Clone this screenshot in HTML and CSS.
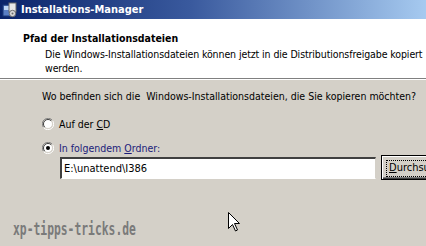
FILE: index.html
```html
<!DOCTYPE html>
<html lang="de">
<head>
<meta charset="utf-8">
<title>Installations-Manager</title>
<link rel="stylesheet" href="styles.css">
</head>
<body>
<div class="window">
  <div class="titlebar">
    <svg class="app-icon" width="16" height="16" viewBox="0 0 16 16">
      <rect x="1" y="3" width="8" height="11" fill="#5a7fc4" stroke="#1d3a7a" stroke-width="1"/>
      <rect x="2" y="4" width="6" height="4" fill="#bcd4f4"/>
      <rect x="7" y="1" width="7" height="9" fill="#e8e8e8" stroke="#6b6b6b" stroke-width="1"/>
      <circle cx="10.5" cy="11.5" r="3.2" fill="#d8d8d8" stroke="#6b6b6b" stroke-width="1"/>
      <circle cx="10.5" cy="11.5" r="1" fill="#6b6b6b"/>
    </svg>
    <span class="title">Installations-Manager</span>
  </div>
  <div class="header">
    <div class="header-title">Pfad der Installationsdateien</div>
    <div class="header-desc">Die Windows-Installationsdateien können jetzt in die Distributionsfreigabe kopiert<br>werden.</div>
  </div>
  <div class="content">
    <div class="question">Wo befinden sich die &nbsp;Windows-Installationsdateien, die Sie kopieren möchten?</div>
    <div class="radio-row">
      <svg class="radio" width="12" height="12" viewBox="0 0 12 12">
        <path d="M10.5 2.5 A5.5 5.5 0 0 0 1.5 9.5" fill="none" stroke="#808080"/>
        <path d="M1.5 9.5 A5.5 5.5 0 0 0 10.5 2.5" fill="none" stroke="#ffffff"/>
        <circle cx="6" cy="6" r="4.5" fill="#ffffff"/>
        <path d="M9.2 2.8 A4.5 4.5 0 0 0 2.8 9.2" fill="none" stroke="#404040"/>
        <path d="M2.8 9.2 A4.5 4.5 0 0 0 9.2 2.8" fill="none" stroke="#d4d0c8"/>
      </svg>
      <span class="label">Auf der <u>C</u>D</span>
    </div>
    <div class="radio-row">
      <svg class="radio" width="12" height="12" viewBox="0 0 12 12">
        <path d="M10.5 2.5 A5.5 5.5 0 0 0 1.5 9.5" fill="none" stroke="#808080"/>
        <path d="M1.5 9.5 A5.5 5.5 0 0 0 10.5 2.5" fill="none" stroke="#ffffff"/>
        <circle cx="6" cy="6" r="4.5" fill="#ffffff"/>
        <path d="M9.2 2.8 A4.5 4.5 0 0 0 2.8 9.2" fill="none" stroke="#404040"/>
        <path d="M2.8 9.2 A4.5 4.5 0 0 0 9.2 2.8" fill="none" stroke="#d4d0c8"/>
        <circle cx="6" cy="6" r="2" fill="#000000"/>
      </svg>
      <span class="label selected">In folgendem <u>O</u>rdner:</span>
    </div>
    <div class="path-row">
      <div class="path-input">E:\unattend\I386</div>
      <div class="browse-btn"><span class="focus"><u>D</u>urchsuchen...</span></div>
    </div>
  </div>
  <div class="watermark"><span>xp-tipps-tricks.de</span></div>
  <svg class="cursor" width="13" height="20" viewBox="0 0 13 20">
    <path d="M0.5 0.5 L0.5 16.5 L4.5 12.5 L7.5 19 L9.5 18 L6.5 11.5 L11.5 11.5 Z" fill="#ffffff" stroke="#000000" stroke-width="1" stroke-linejoin="miter"/>
  </svg>
</div>
</body>
</html>
```

FILE: styles.css
```css
html, body {
  margin: 0;
  padding: 0;
  width: 426px;
  height: 246px;
  overflow: hidden;
  background: #d4d0c8;
}

.window {
  position: relative;
  width: 426px;
  height: 246px;
  overflow: hidden;
  font-family: "DejaVu Sans Condensed", "Liberation Sans", sans-serif;
  font-size: 10.5px;
  color: #000;
  background: #d4d0c8;
}

.titlebar {
  height: 19px;
  display: flex;
  align-items: center;
  gap: 3px;
  padding-left: 2px;
  background: linear-gradient(to right, #0a246a 0%, #3a5a9e 45%, #a6caf0 100%);
}

.app-icon {
  flex: none;
}

.title {
  color: #fff;
  font-weight: bold;
  font-size: 11px;
  white-space: nowrap;
}

.header {
  background: #fff;
  height: 60px;
  padding: 13px 0 0 23px;
  box-sizing: border-box;
  border-bottom: 1px solid #808080;
  box-shadow: 0 1px 0 #fff;
  white-space: nowrap;
}

.header-title {
  font-weight: bold;
  font-size: 10.5px;
  line-height: 13px;
}

.header-desc {
  margin-top: 2px;
  padding-left: 22px;
  line-height: 14px;
  letter-spacing: -0.1px;
}

.content {
  padding: 11px 0 0 42px;
  white-space: nowrap;
}

.question {
  line-height: 13px;
}

.radio-row {
  display: flex;
  align-items: center;
  gap: 5px;
  height: 13px;
  margin-top: 14px;
}

.radio-row + .radio-row {
  margin-top: 11px;
}

.radio {
  flex: none;
}

.label.selected {
  color: #1c1c7a;
}

.path-row {
  display: flex;
  align-items: center;
  gap: 5px;
  width: 420px;
  margin-top: 1px;
  margin-left: 18px;
}

.path-input {
  flex: none;
  width: 316px;
  height: 22px;
  box-sizing: border-box;
  background: #fff;
  border-top: 2px solid #404040;
  border-left: 2px solid #404040;
  border-right: 1px solid #d4d0c8;
  border-bottom: 1px solid #fff;
  padding: 2px 0 0 2px;
  line-height: 16px;
  font-size: 11px;
}

.browse-btn {
  flex: none;
  width: 80px;
  height: 25px;
  box-sizing: border-box;
  border: 1px solid #000;
  background: #d4d0c8;
  box-shadow: inset 1px 1px 0 #fff, inset -1px -1px 0 #404040, inset -2px -2px 0 #808080;
  padding: 4px;
}

.focus {
  display: block;
  height: 15px;
  border: 1px dotted #000;
  padding-left: 2px;
  line-height: 14px;
  font-size: 11px;
}

.watermark {
  padding: 39px 0 0 13px;
  color: #7a7a7a;
  font-family: "DejaVu Sans Mono", monospace;
  font-weight: bold;
  font-size: 18px;
  line-height: 20px;
}

.watermark span {
  display: inline-block;
  transform: scaleX(0.63);
  transform-origin: 0 0;
}

.cursor {
  position: absolute;
  left: 228px;
  top: 212px;
}
```
